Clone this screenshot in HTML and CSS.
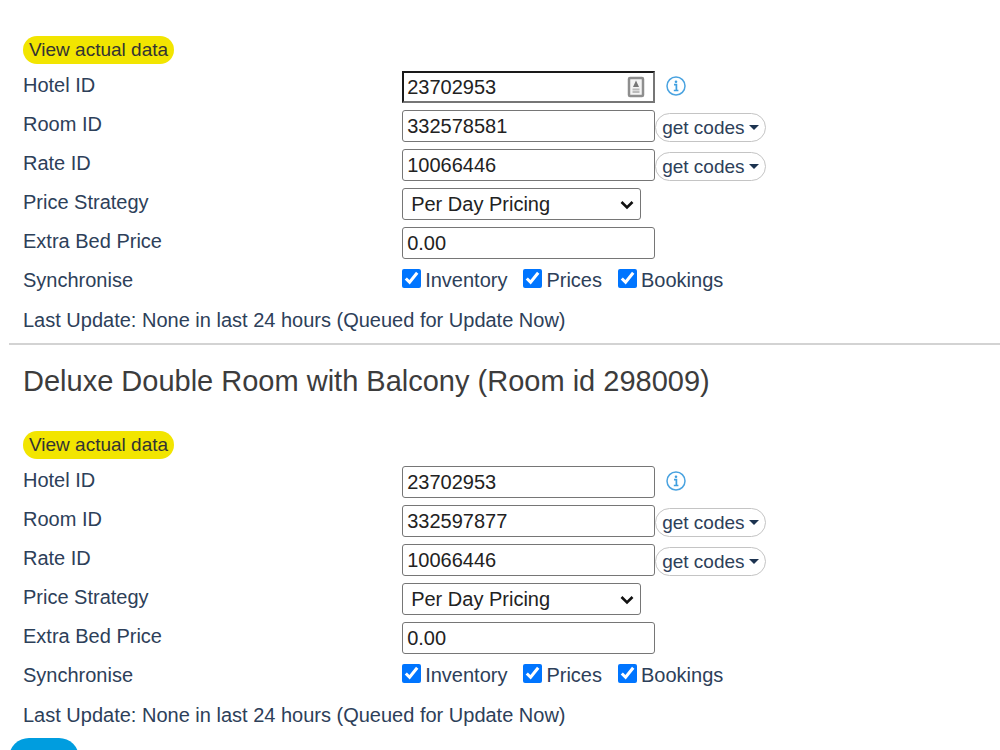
FILE: index.html
```html
<!DOCTYPE html>
<html lang="en">
<head>
  <meta charset="UTF-8">
  <title>Room mapping</title>
  <link rel="stylesheet" href="styles.css">
</head>
<body>

<form class="mapping">
  <section class="room">
    <a href="#" class="view-data">View actual data</a>
    <div class="rows">
      <label for="hotel1">Hotel ID</label>
      <div class="field">
        <div class="focus-wrap">
          <input type="text" id="hotel1" class="text focused" value="23702953">
          <svg class="autofill" viewBox="0 0 18 22" aria-hidden="true"><rect x="2" y="2" width="14" height="18" rx="1" fill="#f4f4f4" stroke="#8e8e8e" stroke-width="2.500"/><path d="M9 4.500l3 6.500H6z" fill="#777"/><path d="M5.500 13.500h7M5.500 16h7" stroke="#bbb" stroke-width="2"/></svg>
        </div>
        <svg class="info" viewBox="0 0 20 20" role="img" aria-label="Info"><circle cx="10" cy="10" r="9" fill="none" stroke="#4aa3e0" stroke-width="1.500"/><circle cx="10" cy="5.800" r="1.300" fill="#3f9fe0"/><path d="M8 8.600h2.400v5.800M7.800 14.500h4.600" fill="none" stroke="#3f9fe0" stroke-width="1.700"/></svg>
      </div>
      <label for="room1">Room ID</label>
      <div class="field">
        <input type="text" id="room1" class="text" value="332578581">
        <button type="button" class="codes">get codes</button>
      </div>
      <label for="rate1">Rate ID</label>
      <div class="field">
        <input type="text" id="rate1" class="text" value="10066446">
        <button type="button" class="codes">get codes</button>
      </div>
      <label for="strategy1">Price Strategy</label>
      <div class="field">
        <div class="select-wrap">
          <select id="strategy1"><option>Per Day Pricing</option></select>
          <svg class="chevron" viewBox="0 0 14 10" aria-hidden="true"><path d="M1.500 2l5.500 5.500L12.500 2" fill="none" stroke="#111" stroke-width="2.600"/></svg>
        </div>
      </div>
      <label for="bed1">Extra Bed Price</label>
      <div class="field">
        <input type="text" id="bed1" class="text" value="0.00">
      </div>
      <span>Synchronise</span>
      <div class="field checks">
        <label><input type="checkbox" checked>Inventory</label>
        <label><input type="checkbox" checked>Prices</label>
        <label><input type="checkbox" checked>Bookings</label>
      </div>
    </div>
    <p class="last-update">Last Update: None in last 24 hours (Queued for Update Now)</p>
  </section>

  <section class="room">
    <h2>Deluxe Double Room with Balcony (Room id 298009)</h2>
    <a href="#" class="view-data">View actual data</a>
    <div class="rows">
      <label for="hotel2">Hotel ID</label>
      <div class="field">
        <input type="text" id="hotel2" class="text" value="23702953">
        <svg class="info" viewBox="0 0 20 20" role="img" aria-label="Info"><circle cx="10" cy="10" r="9" fill="none" stroke="#4aa3e0" stroke-width="1.500"/><circle cx="10" cy="5.800" r="1.300" fill="#3f9fe0"/><path d="M8 8.600h2.400v5.800M7.800 14.500h4.600" fill="none" stroke="#3f9fe0" stroke-width="1.700"/></svg>
      </div>
      <label for="room2">Room ID</label>
      <div class="field">
        <input type="text" id="room2" class="text" value="332597877">
        <button type="button" class="codes">get codes</button>
      </div>
      <label for="rate2">Rate ID</label>
      <div class="field">
        <input type="text" id="rate2" class="text" value="10066446">
        <button type="button" class="codes">get codes</button>
      </div>
      <label for="strategy2">Price Strategy</label>
      <div class="field">
        <div class="select-wrap">
          <select id="strategy2"><option>Per Day Pricing</option></select>
          <svg class="chevron" viewBox="0 0 14 10" aria-hidden="true"><path d="M1.500 2l5.500 5.500L12.500 2" fill="none" stroke="#111" stroke-width="2.600"/></svg>
        </div>
      </div>
      <label for="bed2">Extra Bed Price</label>
      <div class="field">
        <input type="text" id="bed2" class="text" value="0.00">
      </div>
      <span>Synchronise</span>
      <div class="field checks">
        <label><input type="checkbox" checked>Inventory</label>
        <label><input type="checkbox" checked>Prices</label>
        <label><input type="checkbox" checked>Bookings</label>
      </div>
    </div>
    <p class="last-update">Last Update: None in last 24 hours (Queued for Update Now)</p>
  </section>

  <button type="submit" class="save" aria-label="Save"></button>
</form>

</body>
</html>
```
FILE: styles.css
```css
body { margin: 0; background: #fff; color: #2d4059; font-family: "Liberation Sans", Arial, sans-serif; font-size: 20px; line-height: 28px; }
.mapping { padding: 36px 0 0 9px; }
.room { padding-left: 14px; }
.room + .room { border-top: 2px solid #d3d3d3; padding-top: 16px; }
h2 { margin: 0 0 30px; font-size: 29px; line-height: 40px; font-weight: normal; color: #3c3c3c; }
.view-data { display: inline-block; vertical-align: top; padding: 0 6px; border-radius: 14px; background: #f2e500; color: #333; font-size: 19px; text-decoration: none; }
.rows { display: grid; grid-template-columns: 7fr 11fr; row-gap: 7px; margin-top: 7px; padding-right: 2px; }
.field { display: flex; align-items: flex-start; height: 32px; }
.text { box-sizing: border-box; width: 253px; height: 32px; padding: 0 4px; border: 1px solid #767676; border-radius: 3px; background: #fff; color: #222; font: inherit; }
.text.focused { border: 2px solid #767676; border-top-color: #1a1a1a; border-left-color: #1a1a1a; border-radius: 0; outline: none; padding: 0 3px; }
.focus-wrap, .select-wrap { position: relative; }
.focus-wrap { height: 32px; }
.autofill { position: absolute; top: 5px; right: 10px; width: 18px; height: 22px; }
.info { width: 20px; height: 20px; margin: 5px 0 0 11px; }
.codes { display: flex; align-items: center; gap: 4px; height: 29px; margin: 3px 0 0; padding: 0 6px; border: 1px solid #c4c4c4; border-radius: 15px; background: #fff; color: #2d4059; font: inherit; font-size: 19px; cursor: pointer; }
.codes::after { content: ""; border: 5px solid transparent; border-top-color: #1c3350; border-bottom: 0; }
select { appearance: none; box-sizing: border-box; width: 239px; height: 32px; padding: 0 30px 0 8px; border: 1px solid #767676; border-radius: 3px; background: #fff; color: #222; font: inherit; }
.chevron { position: absolute; top: 12px; right: 7px; width: 14px; height: 10px; pointer-events: none; }
.checks { gap: 16px; }
.checks label { display: flex; gap: 4px; }
.checks input { width: 19px; height: 19px; margin: 3px 0 0; accent-color: #0075ff; }
.last-update { margin: 0; padding: 8px 0 9px; }
.save { display: block; width: 70px; height: 40px; margin-bottom: 20px; border: 0; border-radius: 20px; background: #009ddf; cursor: pointer; }
```
